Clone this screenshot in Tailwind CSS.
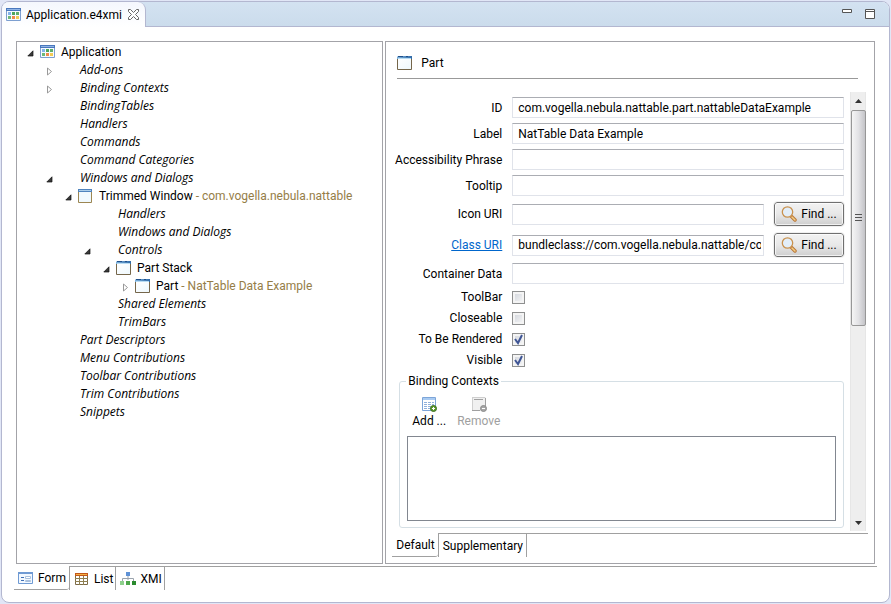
<!DOCTYPE html>
<html lang="en">
<head>
    <meta charset="UTF-8">
    <meta name="viewport" content="width=device-width, initial-scale=1.0">
    <title>Application.e4xmi</title>
    <script src="https://cdn.jsdelivr.net/npm/@tailwindcss/browser@4"></script>
</head>
<body class="bg-[#e1e6f6] min-h-screen flex flex-col font-[Roboto,sans-serif] text-[12px] leading-4 text-black">

    <!-- Shared icons -->
    <svg class="absolute size-0">
        <linearGradient id="blueBar" x1="0" x2="1"><stop offset="0" stop-color="#7fb2dc"/><stop offset="1" stop-color="#2f6aa8"/></linearGradient>
        <linearGradient id="pane" x1="0" y1="0" x2="1" y2="1"><stop offset="0" stop-color="#fff"/><stop offset="1" stop-color="#eef8fd"/></linearGradient>
        <symbol id="app" viewBox="0 0 16 16">
            <path fill="#f7fbff" stroke="#7d9fd0" d="M.5 2.5h14v11H.5z"/>
            <path fill="#4a78bd" d="M0 1h15v3H0z"/><path fill="#8fb4e6" d="M1 2h13v1H1z"/>
            <path fill="#85b4ea" d="M2 5h3v3H2z"/><path fill="#4fa65c" d="M6 5h3v3H6z"/><path fill="#5fae6b" d="M10 5h3v3h-3z"/>
            <path fill="#6db879" d="M2 9h3v3H2z"/><path fill="#f08a4b" d="M6 9h3v3H6z"/><path fill="#f2cb55" d="M10 9h3v3h-3z"/>
        </symbol>
        <symbol id="window" viewBox="0 0 16 16">
            <path fill="#f0f9fe" stroke="#9c8652" d="M.5 3.5h13v11H.5z"/>
            <path fill="#4f83bd" d="M0 1h14v3H0z"/><path fill="#a9cdea" d="M1 2h12v1H1z"/>
        </symbol>
        <symbol id="part" viewBox="0 0 16 16">
            <path fill="url(#pane)" stroke="#75664a" d="M.5 3.5h14v11H.5z"/>
            <path fill="url(#blueBar)" d="M1 1h14v3H0V2z"/><path fill="#b9dcf2" d="M1 3h13v1H1z"/>
            <path fill="#1f4f8a" d="M1 1h5v1H1zM9 1h2v1H9z"/>
        </symbol>
        <symbol id="open" viewBox="0 0 7 7"><path fill="#3a3a3a" stroke="#111" stroke-width=".7" d="M6 .8V6H.8z"/></symbol>
        <symbol id="closed" viewBox="0 0 7 9"><path fill="#fff" stroke="#999" d="M1.500 1v7L5.500 4.500z"/></symbol>
        <symbol id="find" viewBox="0 0 16 16">
            <path stroke="#b9763a" stroke-width="3.500" stroke-linecap="round" d="M10.500 10.500l3.500 3.500"/>
            <path stroke="#f3cf83" stroke-width="1.500" stroke-linecap="round" d="M11 11l3 3"/>
            <circle cx="6.500" cy="6" r="5.200" fill="#e3eef8" stroke="#c9924f" stroke-width="1.300"/>
        </symbol>
    </svg>

    <div class="m-px flex-1 flex flex-col bg-white border border-[#b3b7d0] rounded-lg overflow-hidden">
        <!-- Editor tab bar -->
        <header class="h-[25px] flex justify-between bg-linear-to-b from-[#d3e2f1] to-[#cbdcec] border-b border-[#b3b7d0]">
            <div class="h-[25px] flex items-center pl-1 pr-[6px] bg-linear-to-b from-[#f4f7fd] to-white border-r border-[#b3b7d0] rounded-tr-lg">
                <svg class="size-4"><use href="#app"/></svg>
                <h1 class="ml-1">Application.e4xmi</h1>
                <button class="ml-[6px]" aria-label="Close">
                    <svg class="size-[11px]" fill="#fff" stroke="#666" viewBox="0 0 11 11"><path d="M.5.5h2l3 3 3-3h2v2l-3 3 3 3v2h-2l-3-3-3 3h-2v-2l3-3-3-3z"/></svg>
                </button>
            </div>
            <div class="flex items-start gap-[13px] pt-[7px] pr-[14px]">
                <button aria-label="Minimize"><svg class="w-[10px] h-1" fill="#fff" stroke="#555"><path d="M.5.5h9v3h-9z"/></svg></button>
                <button aria-label="Maximize"><svg class="size-[10px]" fill="#fff" stroke="#555"><path d="M.5.5h9v9h-9zM0 2.500h10"/></svg></button>
            </div>
        </header>

        <main class="flex-1 grid grid-cols-[3fr_4fr] gap-[2px] pt-[14px] pl-[14px] pr-[14px]">
            <!-- Model tree -->
            <section class="min-w-0 overflow-hidden border border-[#a3a3a8] pt-px pl-[10px] pr-[25px] leading-[18px] whitespace-nowrap">
                <ul id="tree"></ul>
            </section>

            <!-- Details -->
            <section class="min-w-0 flex flex-col border border-[#a3a3a8] pl-[6px] pr-[6px] pb-[6px]">
                <h2 class="ml-[5px] mr-[10px] h-[37px] pt-[5px] flex items-center gap-2 border-b border-[#999]">
                    <svg class="size-4"><use href="#part"/></svg>Part
                </h2>
                <div class="flex-1 mt-[13px] flex mr-[2px]">
                    <form class="flex-1 min-w-0 pl-[7px] pt-[5px] pr-[6px] flex flex-col">
                        <div class="grid grid-cols-[103px_minmax(0,1fr)] gap-x-[10px] gap-y-[5px] items-center">
                            <label for="id" class="text-right whitespace-nowrap">ID</label>
                            <input id="id" value="com.vogella.nebula.nattable.part.nattableDataExample" class="h-[21px] px-[5px] border border-[#e0e3ea] border-t-[#abadb3]">
                            <label for="label" class="text-right whitespace-nowrap">Label</label>
                            <input id="label" value="NatTable Data Example" class="h-[21px] px-[5px] border border-[#e0e3ea] border-t-[#abadb3]">
                            <label for="phrase" class="justify-self-end whitespace-nowrap">Accessibility Phrase</label>
                            <input id="phrase" class="h-[21px] px-[5px] border border-[#e0e3ea] border-t-[#abadb3]">
                            <label for="tooltip" class="text-right whitespace-nowrap">Tooltip</label>
                            <input id="tooltip" class="h-[21px] px-[5px] border border-[#e0e3ea] border-t-[#abadb3]">
                            <label for="icon" class="text-right whitespace-nowrap">Icon URI</label>
                            <div class="h-[26px] flex items-center gap-[10px]">
                                <input id="icon" class="flex-1 min-w-0 h-[21px] px-[5px] border border-[#e0e3ea] border-t-[#abadb3]">
                                <button type="button" class="w-[70px] h-6 flex items-center justify-center gap-1 rounded-[3px] border border-[#707070] bg-linear-to-b from-[#f2f2f2] via-[#e8e8e8] to-[#cfcfcf] inset-ring inset-ring-white/70 outline outline-[#f0f0f0]"><svg class="size-4" fill="none"><use href="#find"/></svg>Find ...</button>
                            </div>
                            <label for="class" class="text-right whitespace-nowrap"><a href="#class" class="text-[#0066cc] underline">Class URI</a></label>
                            <div class="h-[26px] flex items-center gap-[10px]">
                                <input id="class" value="bundleclass://com.vogella.nebula.nattable/com.vogella.nebula.nattable.part.NattableDataExample" class="flex-1 min-w-0 h-[21px] pl-[5px] pr-[2px] border border-[#e0e3ea] border-t-[#abadb3]">
                                <button type="button" class="w-[70px] h-6 flex items-center justify-center gap-1 rounded-[3px] border border-[#707070] bg-linear-to-b from-[#f2f2f2] via-[#e8e8e8] to-[#cfcfcf] inset-ring inset-ring-white/70 outline outline-[#f0f0f0]"><svg class="size-4" fill="none"><use href="#find"/></svg>Find ...</button>
                            </div>
                            <label for="data" class="text-right whitespace-nowrap">Container Data</label>
                            <input id="data" class="h-[21px] px-[5px] border border-[#e0e3ea] border-t-[#abadb3]">
                            <label for="toolbar" class="text-right whitespace-nowrap">ToolBar</label>
                            <span class="grid w-[13px]">
                                <input id="toolbar" type="checkbox" class="peer col-start-1 row-start-1 appearance-none size-[13px] border border-[#8e8f8f] bg-linear-to-br from-[#cfd3da] to-[#f8f8f8] inset-ring-2 inset-ring-[#f4f4f4]">
                                <svg class="invisible peer-checked:visible pointer-events-none col-start-1 row-start-1 size-[13px]" fill="none" stroke="#3f5595" stroke-width="2"><path d="M3 6l3 4 4-8"/></svg>
                            </span>
                            <label for="closeable" class="text-right whitespace-nowrap">Closeable</label>
                            <span class="grid w-[13px]">
                                <input id="closeable" type="checkbox" class="peer col-start-1 row-start-1 appearance-none size-[13px] border border-[#8e8f8f] bg-linear-to-br from-[#cfd3da] to-[#f8f8f8] inset-ring-2 inset-ring-[#f4f4f4]">
                                <svg class="invisible peer-checked:visible pointer-events-none col-start-1 row-start-1 size-[13px]" fill="none" stroke="#3f5595" stroke-width="2"><path d="M3 6l3 4 4-8"/></svg>
                            </span>
                            <label for="rendered" class="text-right whitespace-nowrap">To Be Rendered</label>
                            <span class="grid w-[13px]">
                                <input id="rendered" type="checkbox" checked class="peer col-start-1 row-start-1 appearance-none size-[13px] border border-[#8e8f8f] bg-linear-to-br from-[#cfd3da] to-[#f8f8f8] inset-ring-2 inset-ring-[#f4f4f4]">
                                <svg class="invisible peer-checked:visible pointer-events-none col-start-1 row-start-1 size-[13px]" fill="none" stroke="#3f5595" stroke-width="2"><path d="M3 6l3 4 4-8"/></svg>
                            </span>
                            <label for="visible" class="text-right whitespace-nowrap">Visible</label>
                            <span class="grid w-[13px]">
                                <input id="visible" type="checkbox" checked class="peer col-start-1 row-start-1 appearance-none size-[13px] border border-[#8e8f8f] bg-linear-to-br from-[#cfd3da] to-[#f8f8f8] inset-ring-2 inset-ring-[#f4f4f4]">
                                <svg class="invisible peer-checked:visible pointer-events-none col-start-1 row-start-1 size-[13px]" fill="none" stroke="#3f5595" stroke-width="2"><path d="M3 6l3 4 4-8"/></svg>
                            </span>
                        </div>

                        <fieldset class="mt-[5px] border border-[#d5dfe5] rounded-[3px] px-[7px] pb-[6px]">
                            <legend class="px-[2px] -ml-px">Binding Contexts</legend>
                            <div class="flex gap-[11px] pl-[5px] pt-2 pb-[7px]">
                                <button type="button" class="flex flex-col items-center">
                                    <svg class="size-4" fill="none">
                                        <path fill="#fff" stroke="#7da5d8" d="M1.500 .5h13v13h-13z"/><path fill="#a9cbf2" d="M2 1h12v2H2z"/>
                                        <path stroke="#8fb0dc" d="M3 5.500h10M3 7.500h10M3 9.500h10M3 11.500h10"/><path stroke="#fff" d="M6.500 4v9M10.500 4v9"/>
                                        <circle cx="12.500" cy="11.500" r="3" fill="#5e9a2e" stroke="#3d7020"/><path stroke="#fff" d="M11 11.500h3M12.500 10v3"/>
                                    </svg>
                                    Add ...
                                </button>
                                <button type="button" disabled class="flex flex-col items-center text-[#a0a0a0]">
                                    <svg class="size-4" fill="none">
                                        <path fill="#f0f0f0" d="M1 0h14v14H1z"/><path stroke="#a0a0a0" d="M1 13.500h8M14.500 1v9M3 2.500h9"/><path stroke="#cfcfcf" d="M1.500 0v13M1 .5h13"/>
                                        <circle cx="12.500" cy="11.500" r="3" fill="#a5a5a5" stroke="#8c8c8c"/><path stroke="#fff" d="M11 11.500h3"/>
                                    </svg>
                                    Remove
                                </button>
                            </div>
                            <select size="5" aria-label="Binding Contexts" class="block w-full h-[85px] border border-[#828790] bg-white"></select>
                        </fieldset>
                    </form>

                    <!-- Scrollbar -->
                    <div class="w-4 flex flex-col items-center bg-[#eeeeee] border-x border-[#e6e6e6]">
                        <svg class="h-[18px] w-[7px]" viewBox="0 0 7 18"><path fill="#333" d="M0 11h7L3.500 7z"/></svg>
                        <div class="w-[15px] h-[216px] flex items-center justify-center border border-[#979797] rounded-[2px] bg-linear-to-r from-[#f5f5f5] via-[#e2e2e5] to-[#c4c4c8]">
                            <svg class="w-[7px] h-2" stroke="#555"><path d="M0 .5h7M0 3.500h7M0 6.500h7"/></svg>
                        </div>
                        <svg class="mt-auto h-[17px] w-[7px]" viewBox="0 0 7 17"><path fill="#333" d="M0 7h7L3.500 11z"/></svg>
                    </div>
                </div>
                <nav class="mt-[2px] flex">
                    <button class="h-6 pl-1 pr-[3px] border-b border-[#a0a0a0] rounded-br-[3px]">Default</button>
                    <button class="h-6 pl-1 pr-[3px] border-t border-x border-[#a0a0a0]">Supplementary</button>
                    <span class="flex-1 border-t border-[#a0a0a0]"></span>
                </nav>
            </section>
        </main>

        <!-- Page tabs -->
        <nav class="mt-[2px] mb-3 ml-3 mr-3 flex">
            <button class="h-6 pl-1 pr-[3px] flex items-center gap-1 border-b border-[#a0a0a0] rounded-br-[3px]">
                <svg class="size-4" fill="none">
                    <path fill="#f2f8ff" stroke="#6f9ad3" d="M.5 2.500h14v11H.5z"/><path fill="#6f9ad3" d="M0 2h15v2H0z"/>
                    <path stroke="#3f6fb5" d="M3 7.500h3M3 10.500h3"/><path fill="#fff" stroke="#a9c0dd" d="M7.500 6.500h5v2h-5zM7.500 10.500h5v1h-5z"/>
                </svg>Form
            </button>
            <button class="h-6 pl-1 pr-[2px] flex items-center gap-1 border-t border-x border-[#a0a0a0]">
                <svg class="size-4" fill="none">
                    <path fill="#fff" stroke="#7c6a45" d="M1.500 2.500h12v11h-12z"/><path fill="#c2571a" d="M1 2h13v3H1z"/><path fill="#f5b041" d="M2 3h11v1H2z"/>
                    <path stroke="#8f8052" d="M1 7.500h13M1 10.500h13M5.500 5v9M9.500 5v9"/>
                </svg>List
            </button>
            <button class="h-6 pl-1 pr-[2px] flex items-center gap-1 border-t border-r border-[#a0a0a0]">
                <svg class="size-4" fill="none">
                    <path stroke="#9aa3ad" d="M8 5v4M2.500 10V7.500h11V10"/><path fill="#5f92d6" d="M6 1h4v4H6z"/>
                    <path fill="#8ed08c" d="M0 10h4v4H0z"/><path fill="#4da64a" d="M6 10h4v4H6z"/><path fill="#2a8a2e" d="M12 10h4v4h-4z"/>
                </svg>XMI
            </button>
            <span class="flex-1 border-t border-[#a0a0a0]"></span>
        </nav>
    </div>

    <script>
        // level, label, arrow, icon, detail
        const nodes = [
            [0, 'Application', 'open', 'app'],
            [1, 'Add-ons', 'closed'],
            [1, 'Binding Contexts', 'closed'],
            [1, 'BindingTables'],
            [1, 'Handlers'],
            [1, 'Commands'],
            [1, 'Command Categories'],
            [1, 'Windows and Dialogs', 'open'],
            [2, 'Trimmed Window', 'open', 'window', 'com.vogella.nebula.nattable'],
            [3, 'Handlers'],
            [3, 'Windows and Dialogs'],
            [3, 'Controls', 'open'],
            [4, 'Part Stack', 'open', 'part'],
            [5, 'Part', 'closed', 'part', 'NatTable Data Example'],
            [3, 'Shared Elements'],
            [3, 'TrimBars'],
            [1, 'Part Descriptors'],
            [1, 'Menu Contributions'],
            [1, 'Toolbar Contributions'],
            [1, 'Trim Contributions'],
            [1, 'Snippets']
        ];
        document.getElementById('tree').innerHTML = nodes.map(([level, label, arrow, icon, detail]) => `
            <li class="flex items-center h-[18px]" style="padding-left: ${level * 19}px">
                <span class="w-[13px] shrink-0 pt-[2px]">${arrow ? `<svg class="w-[7px] ${arrow === 'open' ? 'h-[7px]' : 'h-[9px]'}"><use href="#${arrow}"/></svg>` : ''}</span>
                <span class="w-[21px] shrink-0">${icon ? `<svg class="size-4"><use href="#${icon}"/></svg>` : ''}</span>
                <span class="${icon ? '' : `italic font-['Open_Sans',sans-serif]`}">${label}${detail ? `<span class="text-[#957d47]"> - ${detail}</span>` : ''}</span>
            </li>`).join('');
    </script>
</body>
</html>
